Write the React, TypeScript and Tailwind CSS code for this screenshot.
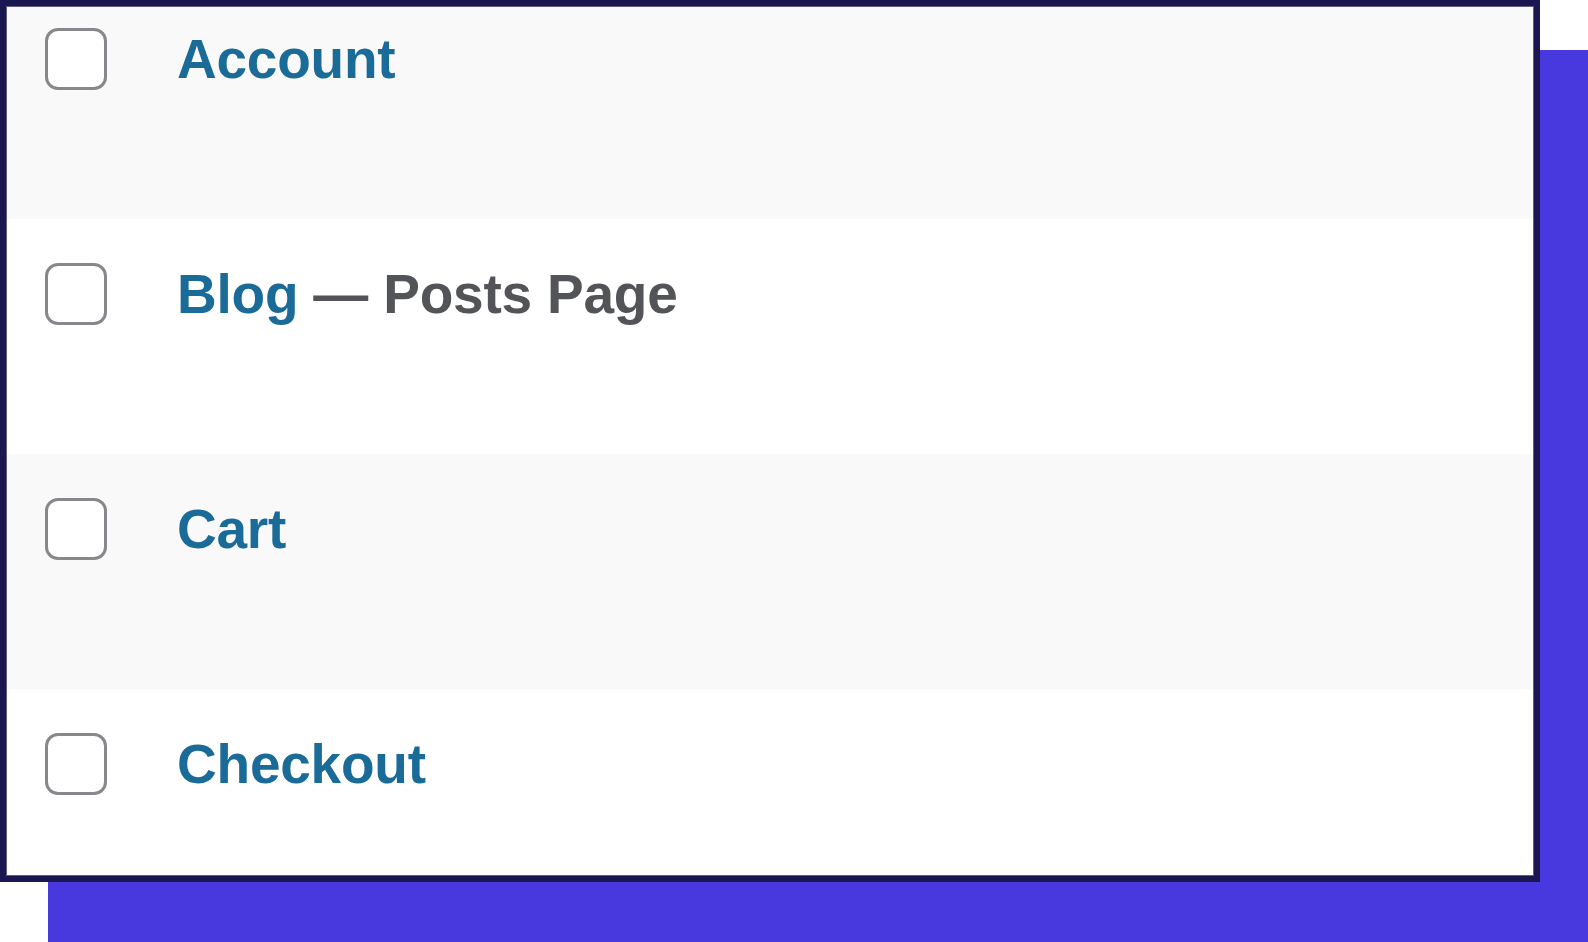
import React from 'react';

interface PageRow {
  id: string;
  title: string;
  state?: string;
}

const rows: PageRow[] = [
  { id: 'account', title: 'Account' },
  { id: 'blog', title: 'Blog', state: 'Posts Page' },
  { id: 'cart', title: 'Cart' },
  { id: 'checkout', title: 'Checkout' },
];

export default function App() {
  return (
    <div
      className="relative w-[1588px] h-[942px] overflow-hidden bg-white"
      style={{ fontFamily: '"Liberation Sans", Arial, sans-serif' }}
    >
      {/* Purple offset backdrop */}
      <div className="absolute left-[48px] top-[50px] right-0 bottom-0 bg-[#4739de]" />

      {/* Card */}
      <div className="relative w-[1540px] h-[882px] border-[6px] border-[#1a1650] bg-white">
        <div className="h-full border border-[#5f5e86] overflow-hidden">
          <div className="-mt-[23px]">
            {rows.map((row, index) => (
              <div
                key={row.id}
                className={`h-[235px] flex items-start pt-[44px] pl-[38px] ${
                  index % 2 === 0 ? 'bg-[#f9f9f9]' : 'bg-white'
                }`}
              >
                <div className="w-[62px] h-[62px] shrink-0 rounded-[13px] border-[3px] border-[#86888c] bg-white" />
                <div className="ml-[70px] leading-[62px] text-[55px] tracking-[-0.004em] font-bold whitespace-nowrap">
                  <span className="text-[#1a6b98]">{row.title}</span>
                  {row.state && (
                    <span className="text-[#525457]"> — {row.state}</span>
                  )}
                </div>
              </div>
            ))}
          </div>
        </div>
      </div>
    </div>
  );
}
